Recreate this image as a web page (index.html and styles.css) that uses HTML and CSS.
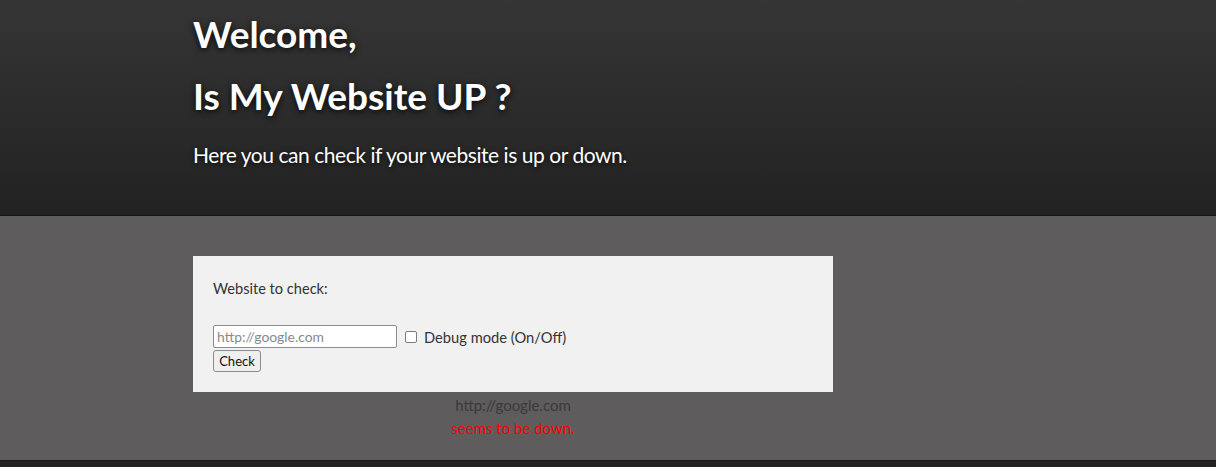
FILE: index.html
```html
<!DOCTYPE html>
<html>
<head>
<meta charset="utf-8">
<link rel="stylesheet" href="styles.css">
</head>
<body>
<header class="hero">
  <div class="container">
    <h1 class="title">Welcome,</h1>
    <h1 class="title title-second">Is My Website UP ?</h1>
    <p class="subtitle">Here you can check if your website is up or down.</p>
  </div>
</header>
<main class="main">
  <div class="container">
    <form class="card">
      <label class="field-label">Website to check:</label>
      <div class="row">
        <input class="url-input" type="text" placeholder="http://google.com">
        <label class="debug"><span class="checkbox"></span>Debug mode (On/Off)</label>
      </div>
      <button class="check-btn" type="button">Check</button>
    </form>
    <div class="result">
      <div class="result-url">http://google.com</div>
      <div class="result-status">seems to be down.</div>
    </div>
  </div>
</main>
<footer class="footer"></footer>
</body>
</html>
```
FILE: styles.css
```css
html, body {
  margin: 0;
  padding: 0;
}
body {
  background: #5e5c5d;
  font-family: "Lato", "Liberation Sans", sans-serif;
  height: 467px;
  display: flex;
  flex-direction: column;
  overflow: hidden;
}
.container {
  width: 830px;
  margin: 0 auto;
}
.hero {
  height: 215px;
  background: linear-gradient(to bottom, #353535, #222222);
  border-bottom: 1px solid #141414;
  box-sizing: content-box;
}
.title {
  margin: 0;
  color: #fff;
  font-size: 37px;
  font-weight: 700;
  line-height: 44px;
  letter-spacing: 0;
  text-shadow: 0 2px 6px rgba(0,0,0,0.85);
}
.title:first-child {
  padding-top: 12px;
}
.title-second {
  margin-top: 18px;
}
.subtitle {
  margin: 24px 0 0;
  color: #fff;
  font-size: 21px;
  letter-spacing: -0.45px;
  text-shadow: 0 1px 4px rgba(0,0,0,0.8);
}
.main {
  flex: 1;
  padding-top: 40px;
}
.card {
  width: 640px;
  box-sizing: border-box;
  background: #f1f1f1;
  padding: 24px 20px 20px;
  display: flex;
  flex-direction: column;
  align-items: flex-start;
}
.field-label {
  font-size: 14.6px;
  color: #333;
  line-height: 17px;
  margin-bottom: 28px;
}
.row {
  display: flex;
  align-items: center;
}
.url-input {
  width: 184px;
  height: 23px;
  box-sizing: border-box;
  border: 1px solid #8d8a93;
  border-radius: 2px;
  background: #fff;
  font-family: "Lato", sans-serif;
  font-size: 13.9px;
  padding: 1px 3px;
  margin: 0;
}
.url-input::placeholder {
  color: #8a8a8a;
}
.debug {
  display: flex;
  align-items: center;
  font-size: 14.7px;
  color: #333;
  margin-left: 8px;
}
.checkbox {
  width: 10px;
  height: 10px;
  border: 1.5px solid #7d7a82;
  border-radius: 2px;
  background: #fff;
  margin-right: 7px;
}
.check-btn {
  margin-top: 2px;
  width: 48px;
  height: 22px;
  padding: 0;
  font-family: "Lato", sans-serif;
  font-size: 13px;
  color: #111;
  background: #efefef;
  border: 1px solid #8d8a93;
  border-radius: 3px;
}
.result {
  width: 640px;
  text-align: center;
  padding-top: 2px;
}
.result-url {
  color: #3a3a3a;
  font-size: 15px;
  line-height: 23px;
}
.result-status {
  color: #ff0000;
  font-size: 15px;
  line-height: 23px;
}
.footer {
  height: 6px;
  background: #222;
  border-top: 1px solid #181818;
}
```
